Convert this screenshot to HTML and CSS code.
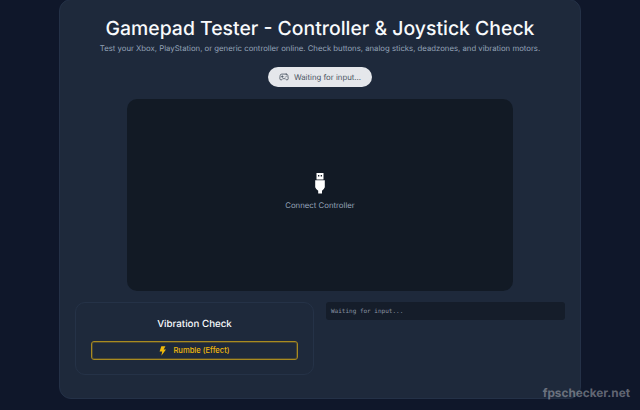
FILE: index.html
```html
<!DOCTYPE html>
<html lang="en">
<head>
<meta charset="utf-8">
<title>Gamepad Tester</title>
<link rel="stylesheet" href="styles.css">
</head>
<body>
<main class="panel">
  <h1 class="title">Gamepad Tester - Controller &amp; Joystick Check</h1>
  <p class="subtitle">Test your Xbox, PlayStation, or generic controller online. Check buttons, analog sticks, deadzones, and vibration motors.</p>
  <div class="status">
    <svg class="status-icon" viewBox="0 0 24 24" fill="none" stroke="currentColor" stroke-width="2" stroke-linecap="round" stroke-linejoin="round"><path d="M6 11h4M8 9v4M15 12h.01M18 10h.01"/><path d="M17.32 5H6.68a4 4 0 0 0-3.98 3.59c-.01.05-.01.1-.02.15C2.6 9.42 2 14.46 2 16a3 3 0 0 0 3 3c1 0 1.5-.5 2-1l1.41-1.41A2 2 0 0 1 9.83 16h4.34a2 2 0 0 1 1.42.59L17 18c.5.5 1 1 2 1a3 3 0 0 0 3-3c0-1.55-.6-6.58-.68-7.26-.01-.05-.01-.1-.02-.15A4 4 0 0 0 17.32 5z"/></svg>
    <span>Waiting for input...</span>
  </div>
  <section class="stage">
    <svg class="usb" viewBox="0 0 10 21"><path fill="#fff" fill-rule="evenodd" d="M1.500 0h7v6.500h-7zM3 2v1.500h1.300V2zM5.700 2v1.500H7V2z"/><path fill="#fff" d="M.2 7.200h9.600v7l-1 1.800-1.800 1.800V20.500H3.200v-2.700L1.200 16l-1-1.800z"/></svg>
    <div class="stage-label">Connect Controller</div>
  </section>
  <section class="lower">
    <div class="card">
      <h2 class="card-title">Vibration Check</h2>
      <button class="rumble" type="button">
        <svg class="bolt" viewBox="0 0 12 16"><path fill="currentColor" d="M4 0h7L8 5.500h4L4 16l1.500-7H1z"/></svg>
        <span>Rumble (Effect)</span>
      </button>
    </div>
    <div class="log">Waiting for input...</div>
  </section>
</main>
<div class="watermark">fpschecker.net</div>
</body>
</html>
```
FILE: styles.css
```css
* { box-sizing: border-box; }
html, body { height: 100%; }
body {
  margin: 0;
  height: 410px;
  overflow: hidden;
  background-color: #0f172a;
  font-family: Inter, "Liberation Sans", sans-serif;
  text-rendering: geometricPrecision;
  display: flex;
  justify-content: center;
  align-items: flex-start;
}
.panel {
  width: 522px;
  height: 400px;
  margin-top: -1px;
  padding: 16px 15px 0;
  background: #1e293b;
  border: 1px solid #243147;
  border-radius: 12px;
  display: flex;
  flex-direction: column;
  align-items: center;
}
.title {
  margin: 0;
  font-size: 19.400px;
  line-height: 24px;
  font-weight: 500;
  color: #f8fafc;
  white-space: nowrap;
}
.subtitle {
  margin: 0;
  font-size: 7.750px;
  line-height: 16px;
  color: #94a3b8;
  white-space: nowrap;
}
.status {
  margin-top: 11px;
  height: 20px;
  width: 104px;
  flex: none;
  border-radius: 10px;
  background: #e5e7eb;
  color: #4b5563;
  font-size: 7.800px;
  display: flex;
  align-items: center;
  justify-content: center;
  gap: 5px;
}
.status-icon { width: 10px; height: 10px; }
.stage {
  margin-top: 12px;
  width: 386px;
  height: 192px;
  flex: none;
  padding-bottom: 4px;
  background: #121a25;
  border-radius: 10px;
  display: flex;
  flex-direction: column;
  align-items: center;
  justify-content: center;
}
.usb { width: 10px; height: 21px; }
.stage-label {
  margin-top: 3px;
  font-size: 7.800px;
  line-height: 16px;
  color: #94a3b8;
}
.lower {
  margin-top: 11px;
  width: 100%;
  display: grid;
  grid-template-columns: 1fr 1fr;
  gap: 12px;
  align-items: start;
}
.card {
  height: 73px;
  padding: 14px 15px 0;
  border: 1px solid #253247;
  border-radius: 10px;
  display: flex;
  flex-direction: column;
  align-items: center;
}
.card-title {
  margin: 0;
  font-size: 9.750px;
  line-height: 16px;
  font-weight: 500;
  color: #f8fafc;
}
.rumble {
  margin-top: 8px;
  width: 100%;
  height: 19px;
  padding: 0;
  border: 1px solid #a88a20;
  border-radius: 3px;
  background: transparent;
  box-shadow: inset 0 0 0 1px rgba(160, 130, 30, 0.35);
  color: #f0b90b;
  font-family: inherit;
  font-size: 7.600px;
  font-weight: 500;
  display: flex;
  align-items: center;
  justify-content: center;
  gap: 7px;
}
.bolt { width: 7px; height: 10px; }
.log {
  height: 18px;
  padding: 1px 5px 0;
  border-radius: 3px;
  background: #151d2a;
  color: #8a94a3;
  font-family: "DejaVu Sans Mono", "Liberation Mono", monospace;
  font-size: 6px;
  line-height: 18px;
}
.watermark {
  position: absolute;
  right: 10px;
  bottom: 10px;
  font-size: 11.800px;
  font-weight: 700;
  color: rgba(255,255,255,0.35);
}
```
